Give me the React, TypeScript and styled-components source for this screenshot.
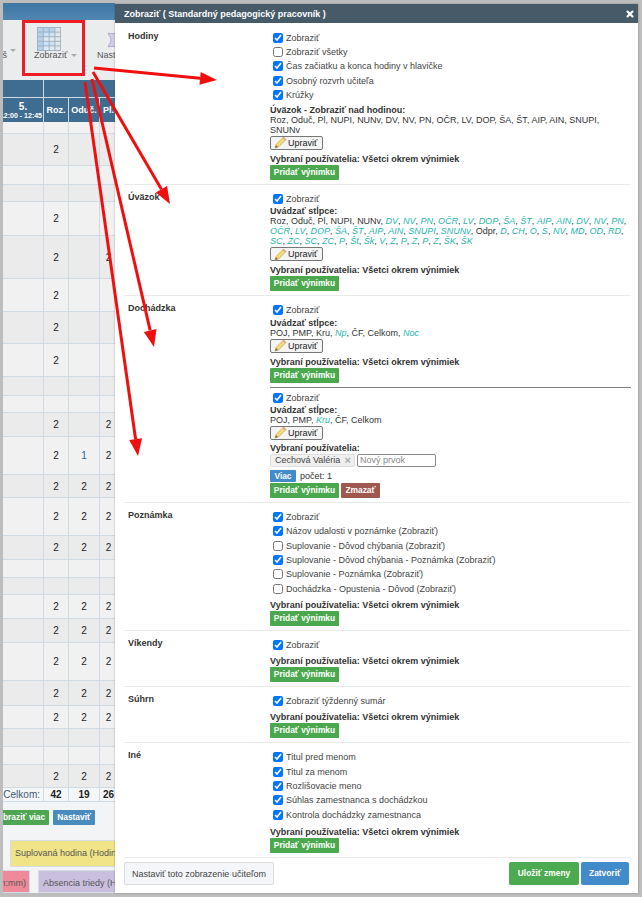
import React from "react";
import styled, { createGlobalStyle } from "styled-components";
import { X } from "lucide-react";

const GlobalStyle = createGlobalStyle`
  html, body {
    margin: 0;
    padding: 0;
    background: #bdbdbd;
  }
  * {
    box-sizing: border-box;
  }
`;

type TableRow = { h: number; vals?: string[] };

const rows: TableRow[] = [
  { h: 12 },
  { h: 32, vals: ["2"] },
  { h: 19 },
  { h: 17 },
  { h: 34, vals: ["2"] },
  { h: 43, vals: ["2", "", "2"] },
  { h: 33, vals: ["2"] },
  { h: 32, vals: ["2"] },
  { h: 33, vals: ["2"] },
  { h: 19 },
  { h: 17 },
  { h: 24, vals: ["2", "", "2"] },
  { h: 38, vals: ["2", "1", "2"] },
  { h: 23, vals: ["2", "2", "2"] },
  { h: 38, vals: ["2", "2", "2"] },
  { h: 24, vals: ["2", "2", "2"] },
  { h: 18 },
  { h: 17 },
  { h: 24, vals: ["2", "2", "2"] },
  { h: 24, vals: ["2", "2", "2"] },
  { h: 38, vals: ["2", "2", "2"] },
  { h: 25, vals: ["2", "2", "2"] },
  { h: 23, vals: ["2", "2", "2"] },
  { h: 18 },
  { h: 18 },
  { h: 23, vals: ["2", "2", "2"] },
];

const arrows = [
  { x1: 94, y1: 68, x2: 217, y2: 80 },
  { x1: 93, y1: 72, x2: 170, y2: 204 },
  { x1: 92, y1: 79, x2: 154, y2: 347 },
  { x1: 85, y1: 82, x2: 138, y2: 456 },
];

const Arrow = ({ x1, y1, x2, y2 }: { x1: number; y1: number; x2: number; y2: number }) => {
  const len = Math.hypot(x2 - x1, y2 - y1);
  const ux = (x2 - x1) / len;
  const uy = (y2 - y1) / len;
  const bx = x2 - ux * 17;
  const by = y2 - uy * 17;
  const pts = `${x2},${y2} ${bx - uy * 6.5},${by + ux * 6.5} ${bx + uy * 6.5},${by - ux * 6.5}`;
  return (
    <>
      <line x1={x1} y1={y1} x2={bx} y2={by} stroke="#f00f0f" strokeWidth={3} />
      <polygon points={pts} fill="#f00f0f" />
    </>
  );
};

const GridIcon = () => (
  <svg width="24" height="24" viewBox="0 0 24 24">
    <rect width="24" height="24" fill="#9fb2c1" />
    {[0, 1, 2, 3].map((c) =>
      [0, 1, 2, 3, 4].map((r) => (
        <rect
          key={`${c}-${r}`}
          x={1 + c * 5.8}
          y={1 + r * 4.6}
          width="4.8"
          height="3.6"
          fill={c === 3 ? "#e4e7e9" : r === 0 || c === 0 ? "#b5d2e8" : r % 2 ? "#cbe4f5" : "#dfebf3"}
        />
      ))
    )}
  </svg>
);

const SpoolIcon = () => (
  <svg width="15" height="16" viewBox="0 0 15 16">
    <path d="M1 1c3 1 9 1 13 0 0 3-3 4-3 7s3 4 3 7c-4-1-10-1-13 0 1-3 3-4 3-7S2 4 1 1z" fill="#d5cde6" stroke="#b3a8cc" />
  </svg>
);

const PencilIcon = () => (
  <svg width="13" height="13" viewBox="0 0 13 13">
    <path d="M1 12l1-3.5L9.5 1 12 3.5 4.5 11z" fill="#f3dc7a" stroke="#c9a84a" strokeWidth="0.7" />
    <path d="M9.5 1L12 3.5 11 4.5 8.5 2z" fill="#e89a9a" />
    <path d="M1 12l1-3 2 2z" fill="#7a6a4a" />
  </svg>
);

const ColumnList = ({ items }: { items: string[] }) => (
  <TextLine>
    {items.map((it, i) => {
      const teal = it.startsWith("*");
      const label = teal ? it.slice(1) : it;
      return (
        <React.Fragment key={i}>
          {teal ? <Teal>{label}</Teal> : label}
          {i < items.length - 1 ? ", " : ""}
        </React.Fragment>
      );
    })}
  </TextLine>
);

const Check = ({ label, on = true }: { label: string; on?: boolean }) => (
  <CheckRow>
    <CheckBox type="checkbox" defaultChecked={on} />
    {label}
  </CheckRow>
);

const EditBtn = () => (
  <EditButton>
    <PencilIcon />
    Upraviť
  </EditButton>
);

const Exceptions = ({ gap = 4 }: { gap?: number }) => (
  <>
    <BoldLine $gap={gap}>Vybraní používatelia: Všetci okrem výnimiek</BoldLine>
    <SmallGreen>Pridať výnimku</SmallGreen>
  </>
);

const uvazokCols = [
  "Roz", "Oduč", "Pl", "NUPI", "NUNv",
  "*DV", "*NV", "*PN", "*OČR", "*LV", "*DOP", "*ŠA", "*ŠT", "*AIP", "*AIN",
  "*DV", "*NV", "*PN", "*OČR", "*LV", "*DOP", "*ŠA", "*ŠT", "*AIP", "*AIN", "*SNUPI", "*SNUNv",
  "Odpr",
  "*D", "*CH", "*O", "*S", "*NV", "*MD", "*OD", "*RD",
  "*SC", "*ZC", "*SC", "*ZC", "*P", "*Št", "*Šk", "*V", "*Z", "*P", "*Z", "*P", "*Z", "*ŠK", "*ŠK",
];

export default function App() {
  return (
    <Frame>
      <GlobalStyle />
      <Page>
        <TopBar />
        <Toolbar>
          <CutTool>
            š <Caret />
          </CutTool>
          <Tool>
            <GridIcon />
            <ToolLabel>
              Zobraziť <Caret />
            </ToolLabel>
          </Tool>
          <NextTool>
            <SpoolIcon />
            <ToolLabel>Nastaviť</ToolLabel>
          </NextTool>
        </Toolbar>
        <HeadTop>
          <HeadCell />
          <HeadCell />
        </HeadTop>
        <HeadRow>
          <HeadCell $align="right">
            <HeadNum>5.</HeadNum>
            <HeadTime>12:00 - 12:45</HeadTime>
          </HeadCell>
          <HeadCell>Roz.</HeadCell>
          <HeadCell>Oduč.</HeadCell>
          <HeadCell>Pl.</HeadCell>
        </HeadRow>
        {rows.map((r, i) => (
          <Row key={i} $h={r.h}>
            <Cell $alt={i % 2 === 1} />
            <Cell $alt={i % 2 === 1}>{r.vals?.[0]}</Cell>
            <Cell $alt={i % 2 === 1} $link={r.vals?.[1] === "1"}>{r.vals?.[1]}</Cell>
            <Cell $alt={i % 2 === 1}>{r.vals?.[2]}</Cell>
          </Row>
        ))}
        <Row $h={14}>
          <TotalLabel>Celkom:</TotalLabel>
          <TotalCell>42</TotalCell>
          <TotalCell>19</TotalCell>
          <TotalCell>26</TotalCell>
        </Row>
        <PageButtons>
          <PageButton $bg="#4ea653">Zobraziť viac</PageButton>
          <PageButton $bg="#4a8bbd">Nastaviť</PageButton>
        </PageButtons>
        <LegendYellow>Suplovaná hodina (Hodina)</LegendYellow>
        <LegendRow>
          <LegendPink>(hh:mm)</LegendPink>
          <LegendPurple>Absencia triedy (Hodina)</LegendPurple>
        </LegendRow>
      </Page>

      <Modal>
        <ModalHead>
          <ModalTitle>Zobraziť ( Standardný pedagogický pracovník )</ModalTitle>
          <X size={10} strokeWidth={5} color="#fff" />
        </ModalHead>
        <ModalBody>
          <Section>
            <SectionName>Hodiny</SectionName>
            <SectionBody>
              <Check label="Zobraziť" />
              <Check label="Zobraziť všetky" on={false} />
              <Check label="Čas začiatku a konca hodiny v hlavičke" />
              <Check label="Osobný rozvrh učiteľa" />
              <Check label="Krúžky" />
              <BoldLine $gap={3}>Úväzok - Zobraziť nad hodinou:</BoldLine>
              <ColumnList
                items={["Roz", "Oduč", "Pl", "NUPI", "NUNv", "DV", "NV", "PN", "OČR", "LV", "DOP", "ŠA", "ŠT", "AIP", "AIN", "SNUPI", "SNUNv"]}
              />
              <EditBtn />
              <Exceptions />
            </SectionBody>
          </Section>
          <Section>
            <SectionName>Úväzok</SectionName>
            <SectionBody>
              <Check label="Zobraziť" />
              <BoldLine>Uvádzať stĺpce:</BoldLine>
              <ColumnList items={uvazokCols} />
              <EditBtn />
              <Exceptions />
            </SectionBody>
          </Section>
          <Section>
            <SectionName>Dochádzka</SectionName>
            <SectionBody>
              <Check label="Zobraziť" />
              <BoldLine>Uvádzať stĺpce:</BoldLine>
              <ColumnList items={["POJ", "PMP", "Kru", "*Np", "ČF", "Celkom", "*Noc"]} />
              <EditBtn />
              <Exceptions />
              <InnerRule />
              <Check label="Zobraziť" />
              <BoldLine>Uvádzať stĺpce:</BoldLine>
              <ColumnList items={["POJ", "PMP", "*Kru", "ČF", "Celkom"]} />
              <EditBtn />
              <BoldLine $gap={3}>Vybraní používatelia:</BoldLine>
              <ChipRow>
                <Chip>
                  Cechová Valéria <ChipX>×</ChipX>
                </Chip>
                <ChipInput placeholder="Nový prvok" />
              </ChipRow>
              <MoreRow>
                <MoreButton>Viac</MoreButton>
                počet: 1
              </MoreRow>
              <ButtonRow>
                <SmallGreen>Pridať výnimku</SmallGreen>
                <DeleteButton>Zmazať</DeleteButton>
              </ButtonRow>
            </SectionBody>
          </Section>
          <Section>
            <SectionName>Poznámka</SectionName>
            <SectionBody>
              <Check label="Zobraziť" />
              <Check label="Názov udalosti v poznámke (Zobraziť)" />
              <Check label="Suplovanie - Dôvod chýbania (Zobraziť)" on={false} />
              <Check label="Suplovanie - Dôvod chýbania - Poznámka (Zobraziť)" />
              <Check label="Suplovanie - Poznámka (Zobraziť)" on={false} />
              <Check label="Dochádzka - Opustenia - Dôvod (Zobraziť)" on={false} />
              <Exceptions />
            </SectionBody>
          </Section>
          <Section>
            <SectionName>Víkendy</SectionName>
            <SectionBody>
              <Check label="Zobraziť" />
              <Exceptions />
            </SectionBody>
          </Section>
          <Section>
            <SectionName>Súhrn</SectionName>
            <SectionBody>
              <Check label="Zobraziť týždenný sumár" />
              <Exceptions />
            </SectionBody>
          </Section>
          <Section>
            <SectionName>Iné</SectionName>
            <SectionBody>
              <Check label="Titul pred menom" />
              <Check label="Titul za menom" />
              <Check label="Rozlišovacie meno" />
              <Check label="Súhlas zamestnanca s dochádzkou" />
              <Check label="Kontrola dochádzky zamestnanca" />
              <Exceptions gap={5} />
            </SectionBody>
          </Section>
        </ModalBody>
        <ModalFoot>
          <FootSecondary>Nastaviť toto zobrazenie učiteľom</FootSecondary>
          <FootActions>
            <FootButton $bg="#4cab50" $w={70}>Uložiť zmeny</FootButton>
            <FootButton $bg="#428bca" $w={48}>Zatvoriť</FootButton>
          </FootActions>
        </ModalFoot>
      </Modal>

      <Highlight />
      <ArrowLayer viewBox="0 0 642 897">
        {arrows.map((a, i) => (
          <Arrow key={i} {...a} />
        ))}
      </ArrowLayer>
    </Frame>
  );
}

const Frame = styled.div`
  position: relative;
  width: 642px;
  height: 897px;
  padding: 3px 4px 4px 3px;
  background: #bdbdbd;
  overflow: hidden;
  font-family: "Liberation Sans", Arial, sans-serif;
  font-size: 9px;
  color: #333;
`;

const Page = styled.div`
  height: 100%;
  width: 112px;
  overflow: hidden;
  background: #f3f4f6;
`;

const TopBar = styled.div`
  height: 17px;
  background: linear-gradient(#3f76a2, #5087b0);
`;

const Toolbar = styled.div`
  height: 60px;
  display: flex;
  background: #ebecee;
  color: #555;
`;

const CutTool = styled.div`
  width: 19px;
  display: flex;
  justify-content: flex-end;
  align-items: flex-start;
  gap: 3px;
  line-height: 12px;
  padding: 29px 6px 0 0;
`;

const Tool = styled.div`
  width: 63px;
  flex: none;
  display: flex;
  flex-direction: column;
  align-items: flex-start;
  padding: 7px 0 0 15px;
`;

const NextTool = styled(Tool)`
  width: 36px;
  padding: 12px 0 0 22px;
`;

const ToolLabel = styled.div`
  display: flex;
  align-items: center;
  gap: 4px;
  height: 12px;
  white-space: nowrap;
  margin: -2px 0 0 -3px;

  ${NextTool} & {
    margin: 1px 0 0 -10px;
  }
`;

const Caret = styled.span`
  display: inline-block;
  width: 0;
  height: 0;
  border-left: 3px solid transparent;
  border-right: 3px solid transparent;
  border-top: 3px solid #aaa;
`;

const HeadTop = styled.div`
  display: grid;
  grid-template-columns: 40px 1fr;
  gap: 1px;
  height: 18px;
  background: #cfdbe4;
  padding-bottom: 1px;
`;

const HeadRow = styled.div`
  display: grid;
  grid-template-columns: 40px 24px 30px 17px;
  gap: 1px;
  height: 24px;
  background: #cfdbe4;
  padding-bottom: 0;
`;

const HeadCell = styled.div<{ $align?: string }>`
  background: #3f6d91;
  color: #fff;
  font-weight: bold;
  font-size: 9px;
  display: flex;
  flex-direction: column;
  justify-content: center;
  align-items: ${(p) => (p.$align === "right" ? "flex-end" : "center")};
  overflow: hidden;
  white-space: nowrap;
`;

const HeadNum = styled.div`
  font-size: 10px;
  align-self: center;
`;

const HeadTime = styled.div`
  font-size: 7px;
  padding-right: 1px;
`;

const Row = styled.div<{ $h: number }>`
  display: grid;
  grid-template-columns: 40px 24px 30px 17px;
  gap: 1px;
  height: ${(p) => p.$h}px;
  padding-bottom: 1px;
  background: #cfdbe4;
`;

const Cell = styled.div<{ $alt?: boolean; $link?: boolean }>`
  background: ${(p) => (p.$alt ? "#ebebeb" : "#f1f1f1")};
  color: ${(p) => (p.$link ? "#2a6496" : "#222")};
  display: flex;
  align-items: center;
  justify-content: center;
  font-size: 10px;
`;

const TotalCell = styled(Cell)`
  background: #f5f6f8;
  font-weight: bold;
  color: #222;
`;

const TotalLabel = styled(TotalCell)`
  justify-content: flex-end;
  padding-right: 3px;
  font-weight: normal;
  color: #3d5a70;
`;

const PageButtons = styled.div`
  display: flex;
  justify-content: flex-end;
  gap: 4px;
  width: 92px;
  margin-top: 8px;
`;

const PageButton = styled.div<{ $bg: string }>`
  background: ${(p) => p.$bg};
  color: #fff;
  font-weight: bold;
  font-size: 8.4px;
  height: 15px;
  line-height: 14px;
  padding: 0 4px;
  flex: none;
  border-radius: 1px;
  white-space: nowrap;
`;

const LegendYellow = styled.div`
  margin: 15px 0 0 7px;
  width: 200px;
  height: 27px;
  line-height: 24px;
  padding-left: 4px;
  background: #f1e487;
  border: 1px solid #d3dde3;
  color: #555;
  white-space: nowrap;
`;

const LegendRow = styled.div`
  display: flex;
  gap: 8px;
  margin-top: 3px;
  margin-left: -53px;
`;

const LegendPink = styled.div`
  width: 80px;
  height: 23px;
  flex: none;
  line-height: 24px;
  padding-right: 3px;
  text-align: right;
  background: #f0899a;
  border: 1px solid #d3dde3;
  color: #555;
`;

const LegendPurple = styled.div`
  width: 200px;
  flex: none;
  height: 23px;
  line-height: 24px;
  padding-left: 4px;
  background: #cbbfe0;
  border: 1px solid #d3dde3;
  color: #555;
  white-space: nowrap;
`;

const Modal = styled.div`
  position: absolute;
  left: 115px;
  top: 4px;
  width: 523px;
  height: 889px;
  background: #fff;
  display: flex;
  flex-direction: column;
  box-shadow: 0 0 2px rgba(0, 0, 0, 0.3);
`;

const ModalHead = styled.div`
  flex: none;
  height: 19px;
  background: #465a68;
  display: flex;
  align-items: center;
  justify-content: space-between;
  padding: 0 3px 0 9px;
`;

const ModalTitle = styled.div`
  color: #fff;
  font-weight: bold;
`;

const ModalBody = styled.div`
  flex: none;
  margin: 0 7px 0 9px;
  padding-top: 0.5px;
`;

const Section = styled.div`
  display: grid;
  grid-template-columns: 146px 1fr;
  padding: 7px 0 4px;
  border-bottom: 1px solid #e8eaec;
`;

const SectionName = styled.div`
  font-weight: bold;
  line-height: 10px;
  padding-left: 4px;
`;

const SectionBody = styled.div`
  display: flex;
  flex-direction: column;
  align-items: flex-start;
`;

const CheckRow = styled.label`
  display: flex;
  align-items: center;
  gap: 3px;
  height: 14.3px;
  padding-left: 3px;
  line-height: 10px;
  color: #444;
`;

const CheckBox = styled.input`
  width: 10px;
  height: 10px;
  margin: 0;
  flex: none;
`;

const BoldLine = styled.div<{ $gap?: number }>`
  font-weight: bold;
  line-height: 10px;
  margin-top: ${(p) => p.$gap ?? 0}px;
`;

const TextLine = styled.div`
  line-height: 10px;
  width: 361px;
`;

const Teal = styled.i`
  color: #1fb5ad;
`;

const EditButton = styled.div`
  margin-top: 1px;
  width: 53px;
  height: 14px;
  display: flex;
  align-items: center;
  gap: 1px;
  padding-left: 3px;
  background: #f4f4f4;
  border: 1px solid #777;
  border-radius: 2px;
  color: #222;
`;

const SmallGreen = styled.div`
  margin-top: 1px;
  width: 69px;
  height: 15px;
  line-height: 15px;
  text-align: center;
  background: #4ca84f;
  color: #fff;
  font-weight: bold;
  font-size: 8.4px;
  border-radius: 1px;
  white-space: nowrap;
`;

const InnerRule = styled.div`
  width: 361px;
  height: 1px;
  margin: 4px 0 3px;
  background: #7f7f7f;
`;

const ChipRow = styled.div`
  display: flex;
  gap: 2px;
  margin-top: 1px;
  height: 13px;
`;

const Chip = styled.div`
  width: 85px;
  display: flex;
  align-items: center;
  justify-content: space-between;
  padding: 0 3px 0 4px;
  background: #f0f0f0;
  border: 1px solid #ddd;
  border-radius: 2px;
  color: #444;
  white-space: nowrap;
`;

const ChipX = styled.span`
  color: #aaa;
  font-weight: bold;
  font-size: 11px;
`;

const ChipInput = styled.input`
  width: 79px;
  height: 13px;
  padding: 0 2px;
  border: 1px solid #888;
  border-radius: 2px;
  font: 9px "Liberation Sans", Arial, sans-serif;

  &::placeholder {
    color: #888;
  }
`;

const MoreRow = styled.div`
  display: flex;
  align-items: center;
  gap: 4px;
  margin-top: 3px;
`;

const MoreButton = styled.div`
  width: 26px;
  height: 12px;
  line-height: 12px;
  text-align: center;
  background: #428bca;
  color: #fff;
  font-weight: bold;
  font-size: 8.4px;
  border-radius: 1px;
`;

const ButtonRow = styled.div`
  display: flex;
  gap: 2px;
  margin-top: 0;
`;

const DeleteButton = styled(SmallGreen)`
  width: 39px;
  background: #a0574d;
`;

const ModalFoot = styled.div`
  flex: none;
  display: flex;
  justify-content: space-between;
  margin: 4px 9px 0 9px;
`;

const FootSecondary = styled.div`
  width: 150px;
  height: 23px;
  line-height: 22px;
  text-align: center;
  background: #f5f6fa;
  border: 1px solid #ddd;
  border-radius: 2px;
  color: #444;
`;

const FootActions = styled.div`
  display: flex;
  gap: 2px;
`;

const FootButton = styled.div<{ $bg: string; $w: number }>`
  width: ${(p) => p.$w}px;
  height: 23px;
  line-height: 22px;
  text-align: center;
  background: ${(p) => p.$bg};
  color: #fff;
  font-weight: bold;
  font-size: 8.4px;
  border-radius: 2px;
`;

const Highlight = styled.div`
  position: absolute;
  left: 22px;
  top: 20px;
  width: 63px;
  height: 56px;
  border: 3px solid #ee1c25;
  pointer-events: none;
`;

const ArrowLayer = styled.svg`
  position: absolute;
  left: 0;
  top: 0;
  width: 642px;
  height: 897px;
  pointer-events: none;
`;
